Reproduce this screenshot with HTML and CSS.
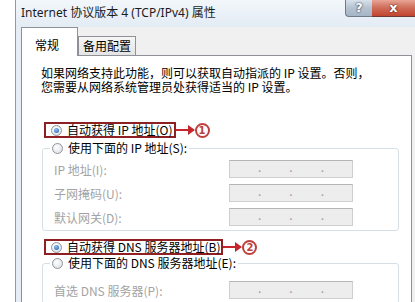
FILE: index.html
```html
<!DOCTYPE html>
<html lang="zh-CN">
<head>
    <meta charset="UTF-8">
    <meta name="viewport" content="width=device-width, initial-scale=1.0">
    <title>Internet 协议版本 4 (TCP/IPv4) 属性</title>
    <link rel="stylesheet" href="styles.css">
</head>
<body>
    <div class="window">
        <!-- Title bar -->
        <div class="titlebar">
            <span class="title">Internet 协议版本 4 (TCP/IPv4) 属性</span>
            <div class="caption-buttons">
                <span class="btn-help">?</span>
                <span class="btn-close">x</span>
            </div>
        </div>

        <div class="dialog">
            <div class="tabs">
                <div class="tab active">常规</div>
                <div class="tab">备用配置</div>
            </div>

            <div class="panel">
                <p class="intro">如果网络支持此功能，则可以获取自动指派的 IP 设置。否则，<br>您需要从网络系统管理员处获得适当的 IP 设置。</p>

                <div class="callout">
                    <label class="choice marked"><span class="radio checked"></span>自动获得 IP 地址(O)</label>
                    <span class="arrow"></span>
                    <span class="num">1</span>
                </div>

                <fieldset class="group">
                    <legend class="choice"><span class="radio"></span>使用下面的 IP 地址(S):</legend>
                    <div class="field"><span class="label">IP 地址(I):</span><span class="ip"><i>.</i><i>.</i><i>.</i></span></div>
                    <div class="field"><span class="label">子网掩码(U):</span><span class="ip"><i>.</i><i>.</i><i>.</i></span></div>
                    <div class="field"><span class="label">默认网关(D):</span><span class="ip"><i>.</i><i>.</i><i>.</i></span></div>
                </fieldset>

                <div class="callout callout-dns">
                    <label class="choice marked"><span class="radio checked"></span>自动获得 DNS 服务器地址(B)</label>
                    <span class="arrow"></span>
                    <span class="num">2</span>
                </div>

                <fieldset class="group group-dns">
                    <legend class="choice"><span class="radio"></span>使用下面的 DNS 服务器地址(E):</legend>
                    <div class="field"><span class="label">首选 DNS 服务器(P):</span><span class="ip"><i>.</i><i>.</i><i>.</i></span></div>
                </fieldset>
            </div>
        </div>
    </div>
</body>
</html>
```

FILE: styles.css
```css
body {
    margin: 0;
    background: #fff;
    font-family: "Noto Sans CJK SC", sans-serif;
    font-size: 12px;
    color: #000;
    overflow: hidden;
}

.window {
    margin-left: 15px;
    width: 399px;
    height: 302px;
    border-left: 1px solid #8d9aa8;
    background: #e6edf5;
    overflow: hidden;
}

/* title bar */
.titlebar {
    height: 27px;
    display: flex;
    justify-content: space-between;
    align-items: flex-start;
    background: linear-gradient(#f3f7fb, #e3ebf4);
}

.title {
    padding: 5px 0 0 5px;
    font-family: "Noto Sans", "Noto Sans CJK SC", sans-serif;
    font-size: 12px;
    line-height: 16px;
    color: #1b1b1b;
}

.caption-buttons {
    display: flex;
}

.btn-help, .btn-close {
    height: 17px;
    line-height: 16px;
    text-align: center;
    color: #fff;
    font-family: "DejaVu Sans", sans-serif;
    font-weight: bold;
    font-size: 13px;
    text-shadow: 0 0 2px #2b3a4c, 0 0 1px #2b3a4c;
    box-sizing: border-box;
}

.btn-help {
    width: 27px;
    border: 1px solid #6d7b8b;
    border-top: none;
    border-right: none;
    border-radius: 0 0 0 4px;
    background: linear-gradient(#d9e2ec, #b4c1cf 50%, #a6b5c6);
}

.btn-close {
    width: 43px;
    border-bottom: 1px solid #6d3a34;
    background: linear-gradient(#e8a596, #d0705c 45%, #c2452f);
    text-shadow: 0 0 2px #5a1a12, 0 0 1px #5a1a12;
}

/* tabs + panel */
.dialog {
    margin-left: 5px;
    background: #f0f0f0;
}

.tabs {
    display: flex;
    align-items: flex-end;
    height: 28px;
}

.tab {
    height: 18px;
    padding: 0 4px 0 4px;
    line-height: 18px;
    border: 1px solid #8e9197;
    border-bottom: none;
    background: linear-gradient(#f6f6f6, #e4e4e4);
}

.tab.active {
    position: relative;
    z-index: 1;
    width: 30px;
    height: 28px;
    padding: 0 12px 0 13px;
    line-height: 33px;
    margin-bottom: -1px;
    background: #fff;
}

.panel {
    height: 260px;
    padding: 10px 0 0 19px;
    border: 1px solid #8e9197;
    background: #fff;
    width: 370px;
}

.intro {
    margin: 0;
    line-height: 14px;
}

.choice {
    display: flex;
    align-items: center;
    height: 12px;
    line-height: 12px;
    white-space: nowrap;
}

.radio {
    width: 9px;
    height: 9px;
    margin-right: 5px;
    border: 1px solid #8f9398;
    border-radius: 50%;
    background: radial-gradient(circle at 40% 35%, #fff, #d8dbe0);
    display: flex;
    align-items: center;
    justify-content: center;
}

.radio.checked::after {
    content: "";
    width: 5px;
    height: 5px;
    border-radius: 50%;
    background: radial-gradient(circle at 40% 35%, #8fc0f0, #1f5ba6);
}

/* red annotation */
.callout {
    display: flex;
    align-items: center;
    margin: 28px 0 4px 3px;
    height: 16px;
}

.callout-dns {
    margin-top: 8px;
    margin-bottom: 2px;
}

.marked {
    height: 12px;
    line-height: 11px;
    align-items: flex-start;
    padding: 0 1px 0 5px;
    border: 2px solid #8e1f22;
}

.marked .radio {
    margin-top: 1px;
}

.arrow {
    position: relative;
    width: 13px;
    height: 2px;
    margin-right: 6px;
    background: #c4262b;
}

.arrow::after {
    content: "";
    position: absolute;
    right: -6px;
    top: -4px;
    border-left: 7px solid #c4262b;
    border-top: 5px solid transparent;
    border-bottom: 5px solid transparent;
}

.num {
    width: 11px;
    height: 11px;
    border: 2px solid #c0403c;
    border-radius: 50%;
    color: #c0403c;
    font-family: "DejaVu Sans", sans-serif;
    font-weight: bold;
    font-size: 10px;
    line-height: 11px;
    text-align: center;
}

/* group boxes */
.group {
    margin: 0 0 0 1px;
    width: 357px;
    box-sizing: border-box;
    padding: 6px 0 4px 7px;
    border: 1px solid #d5dfe5;
    border-radius: 3px;
}

.group legend {
    padding: 0 2px;
}

.group-dns {
    padding-top: 12px;
}

.field {
    display: flex;
    align-items: center;
    padding-left: 4px;
    margin-bottom: 6px;
    color: #a3a3a3;
}

.field:last-child {
    margin-bottom: 0;
}

.label {
    width: 175px;
}

.ip {
    width: 124px;
    height: 18px;
    box-sizing: border-box;
    display: flex;
    justify-content: space-evenly;
    align-items: flex-start;
    border: 1px solid #cfcfcf;
    border-top-color: #b5b5b5;
    background: #ededed;
    color: #9a9a9a;
}

.ip i {
    font-style: normal;
    line-height: 12px;
}
```
